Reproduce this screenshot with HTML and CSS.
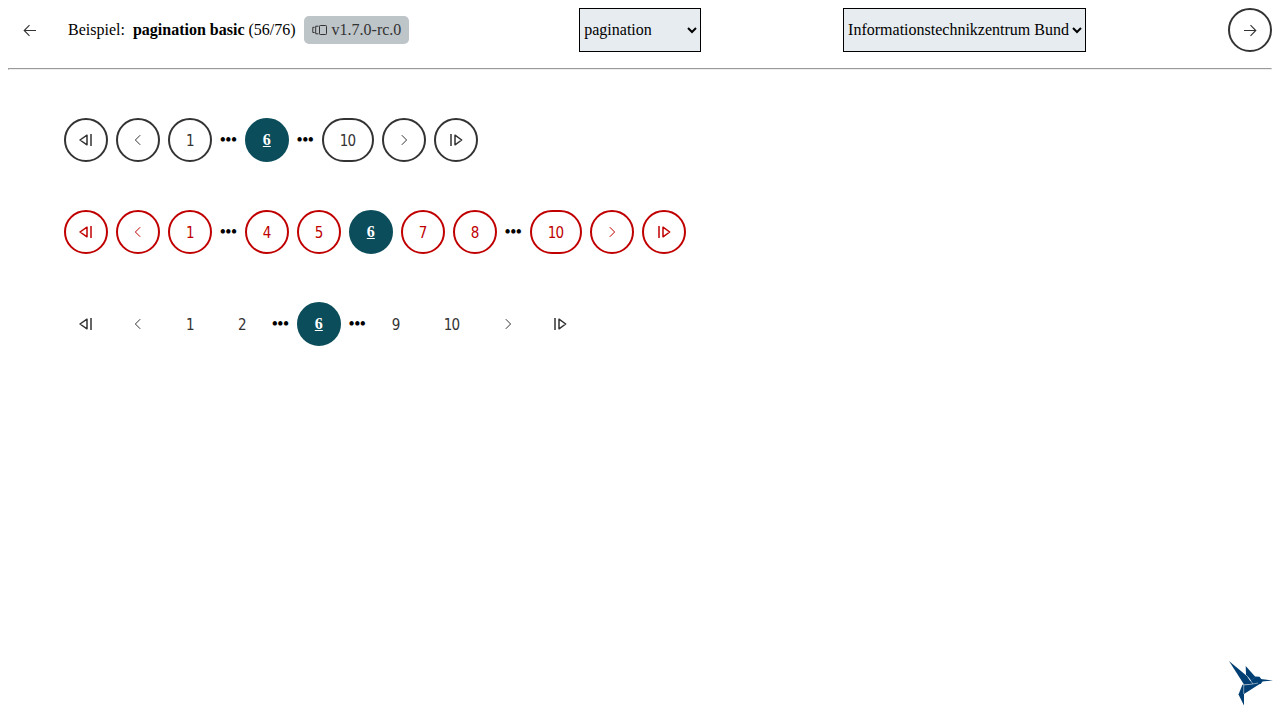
FILE: index.html
```html
<!DOCTYPE html>
<html lang="de">
<head>
<meta charset="utf-8">
<title>pagination basic</title>
<link rel="stylesheet" href="styles.css">
</head>
<body>
<svg class="sprite" aria-hidden="true">
  <symbol id="first" viewBox="0 0 16 16"><path d="M9 3.200v9.600L2 8z" stroke-width="1.500" stroke-linejoin="round"/><path d="M13 2v12" stroke-width="1.500"/></symbol>
  <symbol id="last" viewBox="0 0 16 16"><path d="M7 3.200v9.600L13.700 8z" stroke-width="1.500" stroke-linejoin="round"/><path d="M3 2v12" stroke-width="1.500"/></symbol>
  <symbol id="prev" viewBox="0 0 16 16"><path d="M10.200 3.200L5.400 8l4.800 4.800" stroke-width="1"/></symbol>
  <symbol id="next" viewBox="0 0 16 16"><path d="M5.800 3.200L10.600 8l-4.800 4.800" stroke-width="1"/></symbol>
  <symbol id="left" viewBox="0 0 16 16"><path d="M14 8.500H2.200M7.500 3.200L2.200 8.500l5.300 5.300" stroke-width="1.100"/></symbol>
  <symbol id="right" viewBox="0 0 16 16"><path d="M2 8.500h11.800M8.500 3.200l5.300 5.300-5.300 5.300" stroke-width="1.100"/></symbol>
</svg>
<header class="toolbar">
  <div class="title">
    <button class="btn ghost" aria-label="zurück"><svg class="icon"><use href="#left"/></svg></button>
    <span>Beispiel:</span>
    <span><b>pagination basic</b> (56/76)</span>
    <span class="badge"><svg class="versions" viewBox="0 0 16 16"><rect x="7.500" y="3.500" width="7" height="9" rx=".8"/><path d="M6.500 4.200H3.700v7.600h2.800M2.600 5.300H.800v5.200h1.800"/></svg>v1.7.0-rc.0</span>
  </div>
  <select class="component"><option>pagination</option></select>
  <select class="theme"><option>Informationstechnikzentrum Bund</option></select>
  <button class="btn" aria-label="weiter"><svg class="icon"><use href="#right"/></svg></button>
</header>
<hr>
<main class="examples">
  <nav class="pages">
    <button class="btn"><svg class="icon"><use href="#first"/></svg></button>
    <button class="btn"><svg class="icon"><use href="#prev"/></svg></button>
    <button class="btn">1</button>
    <b class="dots">•••</b>
    <button class="btn current">6</button>
    <b class="dots">•••</b>
    <button class="btn">10</button>
    <button class="btn"><svg class="icon"><use href="#next"/></svg></button>
    <button class="btn"><svg class="icon"><use href="#last"/></svg></button>
  </nav>
  <nav class="pages danger">
    <button class="btn"><svg class="icon"><use href="#first"/></svg></button>
    <button class="btn"><svg class="icon"><use href="#prev"/></svg></button>
    <button class="btn">1</button>
    <b class="dots">•••</b>
    <button class="btn">4</button>
    <button class="btn">5</button>
    <button class="btn current">6</button>
    <button class="btn">7</button>
    <button class="btn">8</button>
    <b class="dots">•••</b>
    <button class="btn">10</button>
    <button class="btn"><svg class="icon"><use href="#next"/></svg></button>
    <button class="btn"><svg class="icon"><use href="#last"/></svg></button>
  </nav>
  <nav class="pages plain">
    <button class="btn"><svg class="icon"><use href="#first"/></svg></button>
    <button class="btn"><svg class="icon"><use href="#prev"/></svg></button>
    <button class="btn">1</button>
    <button class="btn">2</button>
    <b class="dots">•••</b>
    <button class="btn current">6</button>
    <b class="dots">•••</b>
    <button class="btn">9</button>
    <button class="btn">10</button>
    <button class="btn"><svg class="icon"><use href="#next"/></svg></button>
    <button class="btn"><svg class="icon"><use href="#last"/></svg></button>
  </nav>
</main>
<svg class="bird" viewBox="0 0 58 58">
  <path class="wing" d="M7 6l18.500 15.500 4.500 7.500-8 .500z"/>
  <path class="wing" d="M23.700 11l9.800 11-4.500 3.500-5-6z"/>
  <path class="wing" d="M21.500 29.500l9.500-.500 9-1.500L22 39z"/>
  <path class="wing" d="M20.500 29.500l1.500.500v20.500l-5.500-11z"/>
  <path class="wing" d="M27 27l6.500-5.500 4 .300 3.200 4.200-2 3-9 .500z"/>
  <path class="wing" d="M38.500 23.900L51 25.400l-11 1.200z"/>
  <path class="seam" d="M25.500 21.500L31 29l-9.300 1V39M31 29l5-1"/>
</svg>
</body>
</html>
```
FILE: styles.css
```css
body {
  margin: 8px;
  font: 16px/20px "Liberation Serif", serif;
  color: #000;
  background: #fff;
}
.sprite { display: none; }
.toolbar {
  display: flex;
  align-items: center;
  justify-content: space-between;
  height: 44px;
}
.title { display: flex; align-items: center; gap: 8px; padding-right: 28px; }
.title .btn { margin-right: 8px; }
.badge {
  display: flex;
  align-items: center;
  gap: 4px;
  height: 28px;
  padding: 0 8px;
  box-sizing: border-box;
  border-radius: 5px;
  background: #bec5c9;
  color: #333;
}
.versions { width: 16px; height: 16px; fill: none; stroke: #333; stroke-width: 1; }
select {
  height: 44px;
  box-sizing: border-box;
  padding: 0 0 1px;
  border: 1px solid #000;
  border-radius: 0;
  background-color: #e7ecf0;
  color: #000;
  font: 16px "Liberation Serif", serif;
}
.component { width: 122px; }
.theme { width: 243px; }
hr { margin: 16px 0 0; }
.examples {
  display: flex;
  flex-direction: column;
  gap: 48px;
  padding: 48px 56px;
}
.pages { display: flex; align-items: center; gap: 8px; }
.btn {
  display: flex;
  align-items: center;
  justify-content: center;
  box-sizing: border-box;
  min-width: 44px;
  height: 44px;
  padding: 2px 16px 0;
  border: 2px solid #333;
  border-radius: 22px;
  background: transparent;
  color: #333;
  font: 15px/20px "DejaVu Sans Condensed", "DejaVu Sans", sans-serif;
  font-stretch: condensed;
  letter-spacing: -0.6px;
}
.btn:has(.icon) { padding: 0; }
.ghost, .plain .btn { border-color: transparent; }
.danger .btn { border-color: #c00000; color: #c00000; }
.pages .current {
  padding-top: 0;
  border-color: #0b4d5a;
  background: #0b4d5a;
  color: #fff;
  font: bold 16px "Liberation Serif", serif;
  letter-spacing: 0;
  text-decoration: underline;
}
.icon { width: 16px; height: 16px; fill: none; stroke: currentColor; }
.dots { font-size: 16px; }
.bird { position: fixed; left: 1222px; top: 655px; width: 58px; height: 58px; }
.wing { fill: #003f73; }
.seam { fill: none; stroke: #fff; stroke-width: .5; }
```
